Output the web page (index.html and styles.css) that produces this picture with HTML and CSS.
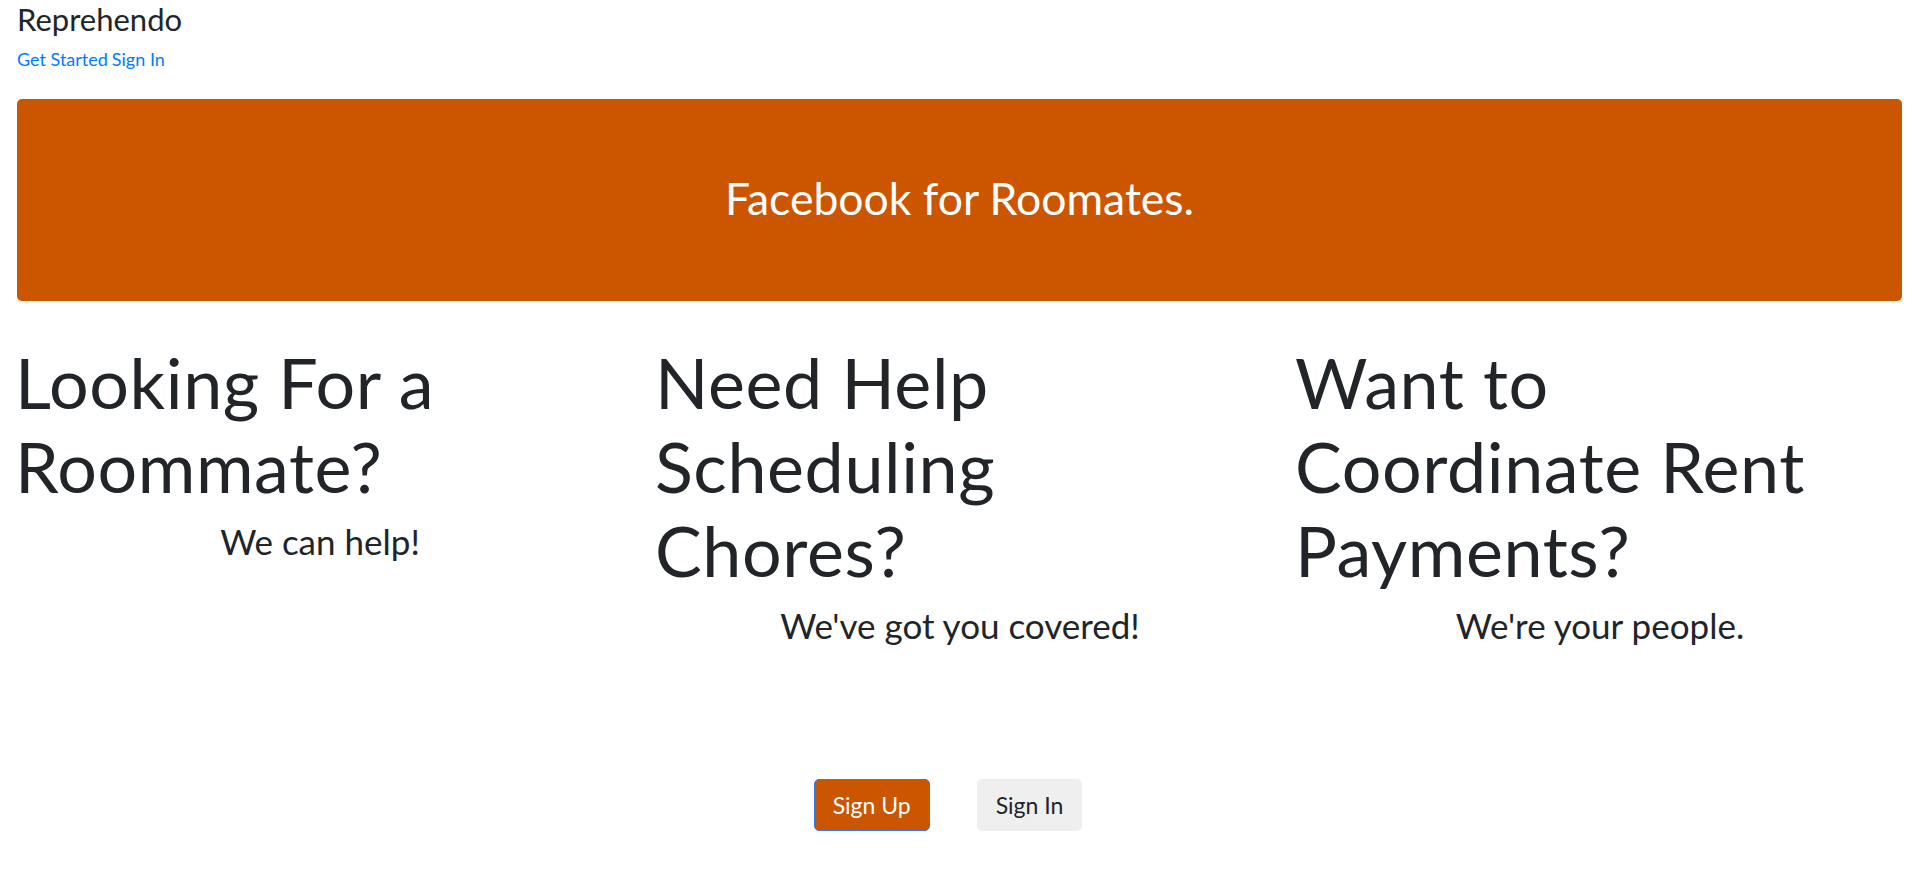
FILE: index.html
```html
<!DOCTYPE html>
<html lang="en">
<head>
<meta charset="utf-8">
<title>Reprehendo</title>
<link rel="stylesheet" href="styles.css">
</head>
<body>
  <header class="topbar">
    <div class="brand">Reprehendo</div>
    <nav class="nav-links">
      <a href="#" class="nav-link">Get Started</a>
      <a href="#" class="nav-link">Sign In</a>
    </nav>
  </header>

  <section class="banner">
    <p class="banner-text">Facebook for Roomates.</p>
  </section>

  <section class="features">
    <div class="feature">
      <h1 class="feature-title">Looking For a Roommate?</h1>
      <h3 class="feature-sub">We can help!</h3>
    </div>
    <div class="feature">
      <h1 class="feature-title">Need Help Scheduling Chores?</h1>
      <h3 class="feature-sub">We've got you covered!</h3>
    </div>
    <div class="feature">
      <h1 class="feature-title">Want to Coordinate Rent Payments?</h1>
      <h3 class="feature-sub">We're your people.</h3>
    </div>
  </section>

  <div class="actions">
    <button class="btn btn-primary">Sign Up</button>
    <button class="btn btn-light">Sign In</button>
  </div>
</body>
</html>
```
FILE: styles.css
```css
* { box-sizing: border-box; }

body {
  margin: 0;
  font-family: Lato, "Open Sans", sans-serif;
  color: #212529;
  background: #fff;
}

.topbar {
  padding: 1px 17px 0;
}

.brand {
  font-size: 31px;
  line-height: 36px;
}

.nav-links {
  margin-top: 10px;
  font-size: 18px;
  line-height: 24px;
  display: flex;
  gap: 4px;
}

.nav-link {
  color: #007bff;
  text-decoration: none;
}

.banner {
  margin: 28px 18px 0 17px;
  height: 202px;
  padding-bottom: 5px;
  background: #cc5500;
  border-radius: 5px;
  display: flex;
  align-items: center;
  justify-content: center;
}

.banner-text {
  margin: 0;
  color: #fff;
  font-size: 44.5px;
  line-height: 53px;
}

.features {
  display: grid;
  grid-template-columns: repeat(3, 1fr);
  margin-top: 39px;
}

.feature {
  padding: 0 15px;
}

.feature-title {
  margin: 0;
  font-size: 70px;
  line-height: 84px;
  font-weight: 400;
  letter-spacing: 0.6px;
  max-width: 540px;
}

.feature-sub {
  margin: 12px 0 0;
  font-size: 35px;
  line-height: 42px;
  font-weight: 400;
  text-align: center;
}

.actions {
  margin-top: 133px;
  display: flex;
  justify-content: center;
  gap: 47px;
  padding-right: 24px;
}

.btn {
  height: 52px;
  padding: 0 18px;
  font-family: inherit;
  font-size: 23px;
  border-radius: 5px;
  cursor: pointer;
}

.btn-primary {
  background: #cc5500;
  color: #fff;
  border: 1.5px solid #2b7de9;
}

.btn-light {
  background: #efefef;
  color: #212529;
  border: 1px solid #efefef;
}
```
